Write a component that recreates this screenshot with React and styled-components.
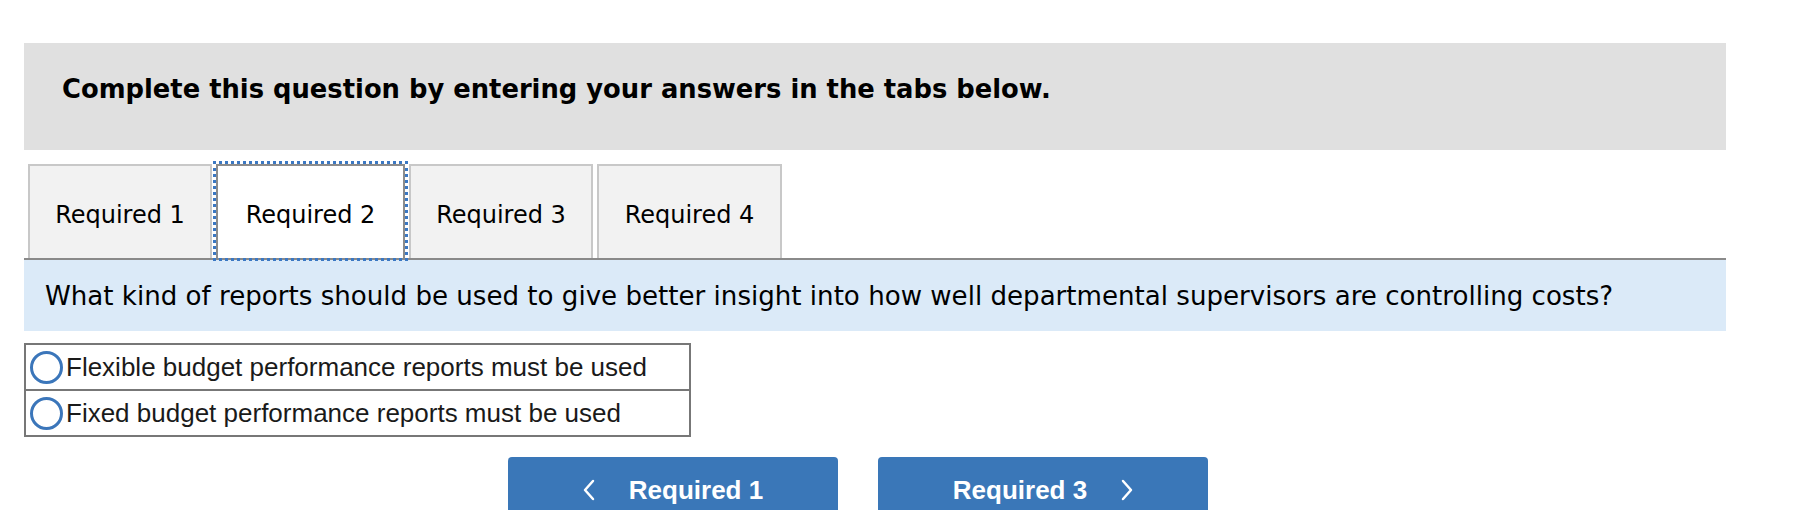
import React from "react";
import styled, { createGlobalStyle } from "styled-components";

const Global = createGlobalStyle`
  html, body { margin: 0; padding: 0; background: #ffffff; }
  body { font-family: "DejaVu Sans", Verdana, sans-serif; color: #000; }
`;

const Page = styled.div`
  width: 1702px;
  padding: 43px 0 0 24px;
`;

const Banner = styled.div`
  height: 107px;
  box-sizing: border-box;
  background: #e0e0e0;
  padding: 24px 0 0 38px;
  font-family: "DejaVu Sans", Verdana, sans-serif;
  font-weight: bold;
  font-size: 25.8px;
  line-height: 44px;
`;

const TabBar = styled.div`
  display: flex;
  align-items: flex-end;
  gap: 4px;
  margin-top: 14px;
  padding-left: 4px;
  border-bottom: 2px solid #8a8a8a;
  height: 94px;
`;

const Tab = styled.div`
  box-sizing: border-box;
  width: ${(p) => p.$w}px;
  height: 94px;
  display: flex;
  align-items: center;
  justify-content: center;
  font-family: "DejaVu Sans", Verdana, sans-serif;
  font-size: 24px;
  background: ${(p) => (p.$active ? "#ffffff" : "#f2f2f2")};
  border: 2px solid ${(p) => (p.$active ? "#8c8c8c" : "#c8c8c8")};
  border-bottom: none;
  outline: ${(p) => (p.$active ? "3px dotted #3b78c3" : "none")};
  outline-offset: 0px;
  padding-top: 5px;
`;

const Question = styled.div`
  height: 71px;
  background: #dbeaf8;
  display: flex;
  align-items: center;
  padding-left: 21px;
  font-family: "DejaVu Sans", Verdana, sans-serif;
  font-size: 26.1px;
`;

const Options = styled.div`
  margin-top: 12px;
  width: 667px;
  box-sizing: border-box;
  border: 2px solid #777;
`;

const Option = styled.label`
  display: flex;
  align-items: center;
  height: 44px;
  padding-left: 4px;
  font-family: "Liberation Sans", Arial, sans-serif;
  font-size: 26px;
  color: #1a1a1a;
  & + & { border-top: 2px solid #777; }
`;

const Radio = styled.span`
  box-sizing: border-box;
  width: 33px;
  height: 33px;
  border-radius: 50%;
  border: 3.5px solid #3b76ba;
  background: #fff;
  flex: none;
  margin-right: 3px;
`;

const ButtonRow = styled.div`
  display: flex;
  gap: 40px;
  margin-top: 20px;
  padding-left: 484px;
`;

const NavButton = styled.button`
  width: 330px;
  height: 66px;
  border: none;
  border-radius: 4px;
  background: #3a77b8;
  color: #fff;
  display: flex;
  align-items: center;
  justify-content: center;
  gap: 34px;
  font-family: "Liberation Sans", Arial, sans-serif;
  font-weight: bold;
  font-size: 26px;
  padding: 0;
`;

const Chevron = ({ dir }) => (
  <svg width="12" height="22" viewBox="0 0 12 22">
    <polyline
      points={dir === "left" ? "10,2 2,11 10,20" : "2,2 10,11 2,20"}
      fill="none"
      stroke="#fff"
      strokeWidth="2.5"
      strokeLinecap="round"
      strokeLinejoin="round"
    />
  </svg>
);

export default function App() {
  return (
    <>
      <Global />
      <Page>
        <Banner>Complete this question by entering your answers in the tabs below.</Banner>
        <TabBar>
          <Tab $w={184}>Required 1</Tab>
          <Tab $w={189} $active>Required 2</Tab>
          <Tab $w={184}>Required 3</Tab>
          <Tab $w={185}>Required 4</Tab>
        </TabBar>
        <Question>
          What kind of reports should be used to give better insight into how well departmental supervisors are controlling costs?
        </Question>
        <Options>
          <Option>
            <Radio />
            Flexible budget performance reports must be used
          </Option>
          <Option>
            <Radio />
            Fixed budget performance reports must be used
          </Option>
        </Options>
        <ButtonRow>
          <NavButton>
            <Chevron dir="left" />
            Required 1
          </NavButton>
          <NavButton>
            Required 3
            <Chevron dir="right" />
          </NavButton>
        </ButtonRow>
      </Page>
    </>
  );
}
